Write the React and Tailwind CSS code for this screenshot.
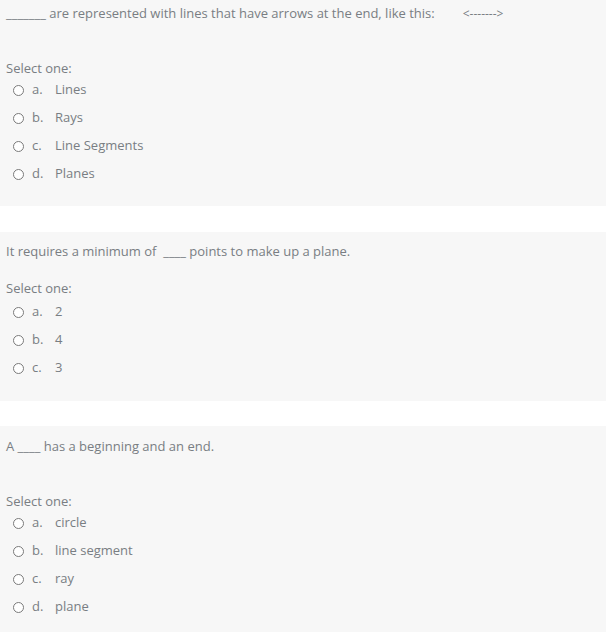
import React from "react";

const questions = [
    {
        id: 1,
        text: (
            <>
                _______ are represented with lines that have arrows at the end, like this:
                <span className="ml-[28px] text-[12px]">&lt;-------&gt;</span>
            </>
        ),
        spacer: "h-[36px]",
        pad: "pt-[4px] pb-[23px] mb-[1px]",
        optTop: "mt-[4px]",
        options: ["Lines", "Rays", "Line Segments", "Planes"],
    },
    {
        id: 2,
        text: <>It requires a minimum of &nbsp;____ points to make up a plane.</>,
        spacer: "h-[19px]",
        pad: "pt-[10px] pb-[24px]",
        optTop: "mt-[6px]",
        options: ["2", "4", "3"],
    },
    {
        id: 3,
        text: <>A ____ has a beginning and an end.</>,
        spacer: "h-[37px]",
        pad: "pt-[11px] pb-[25px]",
        optTop: "mt-[4px]",
        options: ["circle", "line segment", "ray", "plane"],
    },
];

const letters = ["a.", "b.", "c.", "d."];

const Option = ({ letter, label }) => (
    <div className="flex items-center h-[18px]">
        <span className="ml-[7px] w-[11px] h-[11px] rounded-full border-[1.5px] border-[#7a7a7a] bg-white"></span>
        <span className="ml-[8px] w-[23px]">{letter}</span>
        <span>{label}</span>
    </div>
);

const Question = ({ q }) => (
    <div className={`bg-[#f7f7f7] px-[6px] ${q.pad}`}>
        <p className="leading-[18px]">{q.text}</p>
        <div className={q.spacer}></div>
        <p className="leading-[18px]">Select one:</p>
        <div className={`flex flex-col gap-[10px] ${q.optTop}`}>
            {q.options.map((opt, i) => (
                <Option key={i} letter={letters[i]} label={opt} />
            ))}
        </div>
    </div>
);

const App = () => {
    return (
        <div className="bg-white min-h-[632px] flex flex-col gap-[25px] text-[13px] text-[#797e83] font-['Open_Sans',sans-serif]">
            {questions.map((q) => (
                <Question q={q} key={q.id} />
            ))}
        </div>
    );
};

export default App;
